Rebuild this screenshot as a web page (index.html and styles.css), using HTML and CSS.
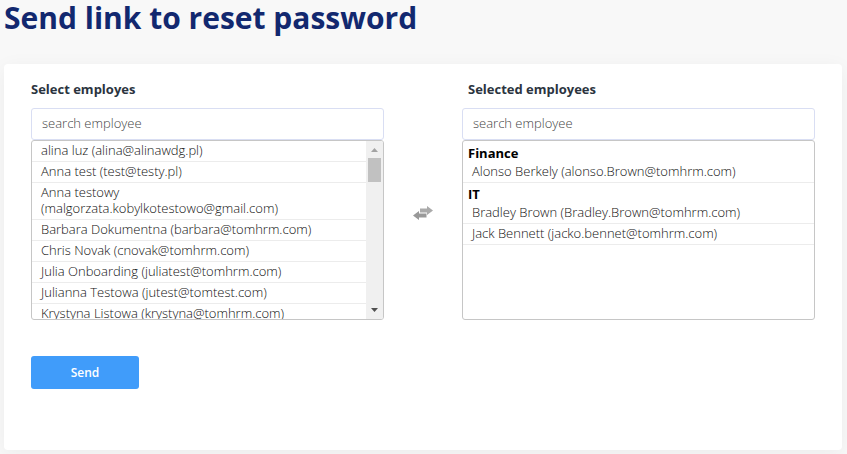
FILE: index.html
```html
<!DOCTYPE html>
<html lang="en">
<head>
<meta charset="utf-8">
<meta name="viewport" content="width=device-width, initial-scale=1">
<title>Send link to reset password</title>
<link rel="stylesheet" href="styles.css">
</head>
<body>
<h1 class="title">Send link to reset password</h1>
<form class="card">
  <div class="picker">
    <section class="column">
      <label class="label" for="search-all">Select employes</label>
      <input class="search" id="search-all" type="text" placeholder="search employee">
      <div class="box">
        <ul class="list">
          <li class="person">alina luz (alina@alinawdg.pl)</li>
          <li class="person">Anna test (test@testy.pl)</li>
          <li class="person">Anna testowy (malgorzata.kobylkotestowo@gmail.com)</li>
          <li class="person">Barbara Dokumentna (barbara@tomhrm.com)</li>
          <li class="person">Chris Novak (cnovak@tomhrm.com)</li>
          <li class="person">Julia Onboarding (juliatest@tomhrm.com)</li>
          <li class="person">Julianna Testowa (jutest@tomtest.com)</li>
          <li class="person">Krystyna Listowa (krystyna@tomhrm.com)</li>
        </ul>
        <div class="scrollbar" aria-hidden="true">
          <svg class="arrow" viewBox="0 0 17 17"><path fill="#a3a3a3" d="M5 11 8.500 7 12 11z"/></svg>
          <div class="thumb"></div>
          <svg class="arrow arrow-end" viewBox="0 0 17 17"><path fill="#505050" d="M5 6h7L8.500 10z"/></svg>
        </div>
      </div>
    </section>
    <svg class="swap" viewBox="0 0 20 14" aria-hidden="true">
      <path fill="#aaa" d="M7 2.500h7V0l6 4.500-6 4.500V6.500H7z"/>
      <path fill="#999" d="M13.500 7.500H6V5L0 9.500 6 14v-2.500h7.500z"/>
    </svg>
    <section class="column">
      <label class="label label-inset" for="search-selected">Selected employees</label>
      <input class="search" id="search-selected" type="text" placeholder="search employee">
      <div class="box">
        <div class="list groups">
          <h2 class="group">Finance</h2>
          <ul class="members">
            <li class="person">Alonso Berkely (alonso.Brown@tomhrm.com)</li>
          </ul>
          <h2 class="group">IT</h2>
          <ul class="members">
            <li class="person">Bradley Brown (Bradley.Brown@tomhrm.com)</li>
            <li class="person">Jack Bennett (jacko.bennet@tomhrm.com)</li>
          </ul>
        </div>
      </div>
    </section>
  </div>
  <button class="send" type="button">Send</button>
</form>
</body>
</html>
```
FILE: styles.css
```css
* {
  box-sizing: border-box;
}

body {
  margin: 0;
  padding: 0 5px 4px 4px;
  background: #f8f8f8;
  color: #111;
  font: 300 13px/16px "Open Sans", sans-serif;
}

.title {
  margin: 0 0 28px;
  color: #12286f;
  font-size: 30px;
  line-height: 36px;
  font-weight: 700;
}

.card {
  padding: 16px 27px 61px;
  background: #fff;
  border-radius: 4px;
  box-shadow: 0 4px 20px rgba(0, 0, 0, 0.05);
}

.picker {
  display: grid;
  grid-template-columns: 1fr 78px 1fr;
}

.column {
  display: flex;
  flex-direction: column;
  min-width: 0;
}

.label {
  margin-bottom: 10px;
  color: #2b3440;
  line-height: 18px;
  font-weight: 700;
}

.label-inset {
  padding-left: 6px;
}

.search {
  width: 100%;
  height: 32px;
  padding: 0 10px 2px;
  border: 1px solid #d9def3;
  border-radius: 3px;
  background: #fff;
  color: #111;
  font: inherit;
}

.search::placeholder {
  color: #444;
}

.box {
  display: flex;
  height: 180px;
  overflow: hidden;
  border: 1px solid #c6c6c6;
  border-radius: 3px;
}

.list {
  flex: 1;
  min-width: 0;
  margin: 0;
  padding: 0;
  overflow-y: auto;
  scrollbar-width: none;
  list-style: none;
}

.person {
  padding: 1px 9px 3px;
  border-bottom: 1px solid #ececec;
}

.groups {
  padding-top: 1px;
}

.group {
  margin: 0;
  padding: 3px 5px 1px;
  color: #000;
  font-size: 13px;
  line-height: 16px;
  font-weight: 700;
}

.members {
  margin: 0;
  padding: 0;
  list-style: none;
}

.scrollbar {
  display: flex;
  flex-direction: column;
  width: 17px;
  background: #f0f0f0;
}

.arrow {
  width: 17px;
  height: 17px;
}

.arrow-end {
  margin-top: auto;
}

.thumb {
  height: 24px;
  margin: 0 2px;
  background: #c1c1c1;
}

.swap {
  width: 20px;
  height: 14px;
  margin-top: 126px;
  justify-self: center;
}

.send {
  display: block;
  width: 108px;
  height: 33px;
  margin-top: 36px;
  padding: 0;
  border: 0;
  border-radius: 3px;
  background: #409cfa;
  color: #fff;
  font: 600 12px/16px "Open Sans", sans-serif;
}
```
